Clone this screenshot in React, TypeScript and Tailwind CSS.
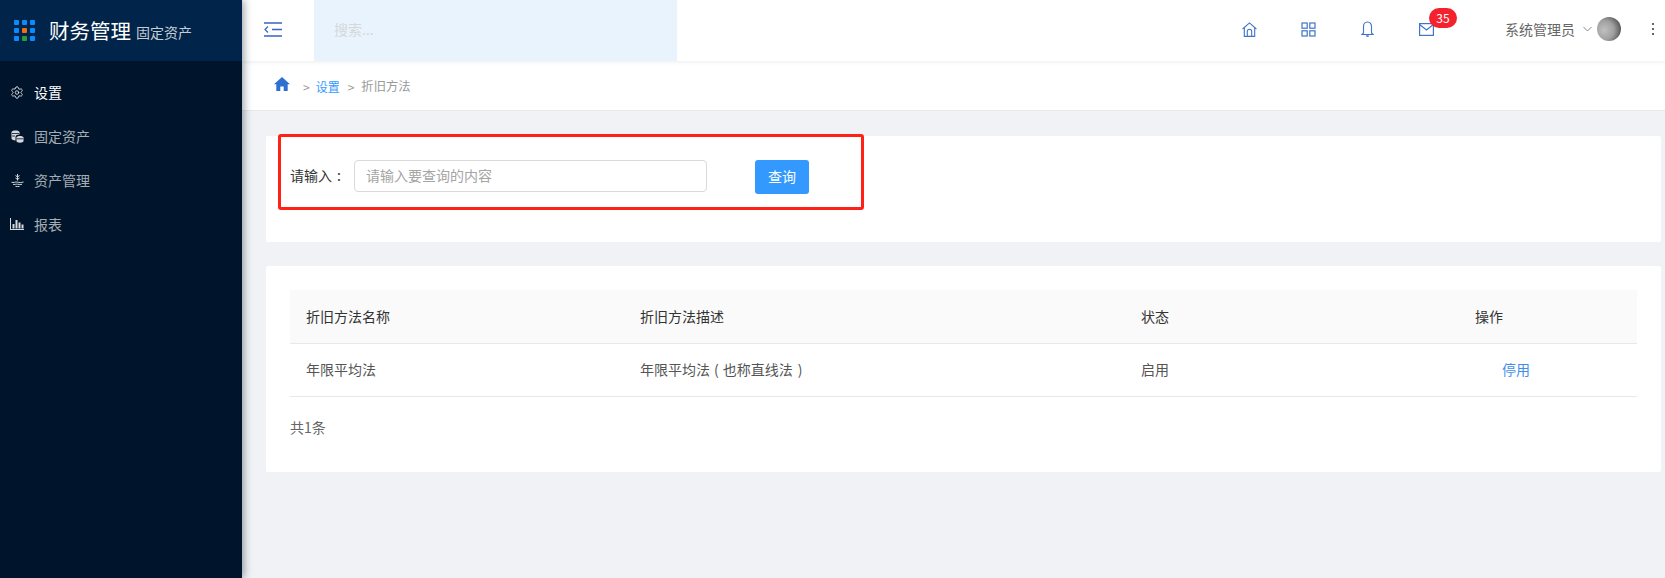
import { Settings } from "lucide-react";

const font = { fontFamily: '"Noto Sans CJK SC", "Liberation Sans", sans-serif' };

function Logo() {
  const cols = ["#0a8cff", "#0a8cff", "#0a8cff", "#0a8cff", "#f0700f", "#0a8cff", "#0a8cff", "#2a9d3a", "#0a8cff"];
  return (
    <div className="grid grid-cols-[repeat(3,5px)] grid-rows-[repeat(3,5px)] gap-[3px] w-[21px] h-[21px]">
      {cols.map((c, i) => (
        <span key={i} className="rounded-[1px]" style={{ background: c }} />
      ))}
    </div>
  );
}

function DbIcon() {
  return (
    <svg width="13" height="13" viewBox="0 0 13 13" fill="#d5d9de">
      <path d="M0.5 2.200C0.5 1 2.400.4 4.500.4S8.500 1 8.500 2.200v2.200c-1.900-.1-3.700.7-4 2.400v3.700C2.300 10.400.5 9.800.5 8.600z" />
      <path d="M5.500 7.500c0-1 1.600-1.600 3.500-1.600s3.500.6 3.500 1.600v3.600c0 1-1.600 1.600-3.500 1.600s-3.500-.6-3.500-1.600z" />
      <path d="M5.800 8.800h6.400" stroke="#001529" strokeWidth=".8" />
      <path d="M1 3.500h7M1 6h3" stroke="#001529" strokeWidth=".8" />
    </svg>
  );
}

function AssetIcon() {
  return (
    <svg width="13" height="13" viewBox="0 0 13 13" fill="none" stroke="#d5d9de" strokeWidth="1">
      <path d="M6.500 0v6.500M4.500 1.500 6.500 3l2-1.500M4.500 4l2 1.500L8.500 4" />
      <path d="M.5 8.200c2 .9 3.900-.6 6-.1 1.800.5 3.800.6 6-.1" />
      <path d="M2 10.300c1.500.5 3.100-.3 4.500-.1 1.500.2 3.100.5 4.500.1" />
      <path d="M4.500 12.400c1 .2 3 .2 4 0" />
    </svg>
  );
}

function ChartIcon() {
  return (
    <svg width="14" height="12" viewBox="0 0 14 12" fill="#d5d9de">
      <path d="M0 0h1v11h13v1H0z" />
      <rect x="2.500" y="6" width="2" height="4.500" />
      <rect x="5.500" y="2" width="2" height="8.500" />
      <rect x="8.500" y="4.500" width="2" height="6" />
      <rect x="11.500" y="6.500" width="2" height="4" />
    </svg>
  );
}

function NavItem({ icon, label, active }: { icon: React.ReactNode; label: string; active?: boolean }) {
  return (
    <div className={`h-[44px] flex items-center pl-[10px] gap-[10px] text-[14px] ${active ? "text-white" : "text-[#a6adb4]"}`}>
      <span className="w-[14px] flex justify-center">{icon}</span>
      <span>{label}</span>
    </div>
  );
}

const blue = "#3f74c9";

function TopIcons() {
  return (
    <div className="flex items-center gap-[44px] mr-[71px]">
      <svg width="15" height="15" viewBox="0 0 15 15" fill="none" stroke={blue} strokeWidth="1.100">
        <path d="M.6 7 7.500.9 14.400 7" />
        <path d="M2.300 5.800v8.600h10.400V5.800" />
        <path d="M5.300 14.400V9.500c0-3 4.400-3 4.400 0v4.900" />
      </svg>
      <svg width="15" height="15" viewBox="0 0 15 15" fill="none" stroke={blue} strokeWidth="1.200">
        <rect x="1" y="1" width="5.200" height="5.200" />
        <rect x="8.800" y="1" width="5.200" height="5.200" />
        <rect x="1" y="8.800" width="5.200" height="5.200" />
        <rect x="8.800" y="8.800" width="5.200" height="5.200" />
      </svg>
      <svg width="15" height="16" viewBox="0 0 15 16" fill="none" stroke={blue} strokeWidth="1.100">
        <path d="M7.500 1C4.800 1 3.500 3.200 3.500 5.500v6.500L2 13.500h11L11.500 12V5.500C11.500 3.200 10.200 1 7.500 1z" />
        <path d="M6.300 15h2.400" strokeWidth="1.600" />
      </svg>
      <div className="relative w-[15px] h-[13px]">
        <svg width="15" height="13" viewBox="0 0 15 13" fill="none" stroke={blue} strokeWidth="1.200">
          <rect x=".6" y=".6" width="13.800" height="11.800" />
          <path d="M.6 1.500 7.500 7l6.900-5.500" />
        </svg>
        <span className="absolute left-[10px] top-[-15px] w-[28px] h-[20px] rounded-full bg-[#f5222d] text-white text-[12px] leading-[20px] text-center">35</span>
      </div>
    </div>
  );
}

function Cell({ className, children }: { className: string; children: React.ReactNode }) {
  return <div className={`pl-[16px] ${className}`}>{children}</div>;
}

export default function App() {
  return (
    <div className="flex h-[578px] w-[1665px] overflow-hidden bg-[#f0f2f5]" style={font}>
      <aside className="w-[242px] shrink-0 bg-[#00152b] shadow-[2px_0_8px_rgba(0,21,41,0.4)] z-20">
        <div className="h-[61px] bg-[#00244a] flex items-center pl-[14px]">
          <Logo />
          <span className="ml-[14px] text-[20.500px] text-white">财务管理</span>
          <span className="ml-[5px] mt-[4px] text-[14px] text-[#c6ccd3]">固定资产</span>
        </div>
        <nav className="pt-[9px]">
          <NavItem active icon={<Settings size={15} strokeWidth={1.400} color="#eceef0" />} label="设置" />
          <NavItem icon={<DbIcon />} label="固定资产" />
          <NavItem icon={<AssetIcon />} label="资产管理" />
          <NavItem icon={<ChartIcon />} label="报表" />
        </nav>
      </aside>

      <div className="flex-1 min-w-0 flex flex-col">
        <header className="h-[61px] shrink-0 bg-white flex items-stretch shadow-[0_1px_4px_rgba(0,21,41,0.08)] z-10">
          <div className="w-[72px] pr-[11px] pb-[2px] flex items-center justify-center">
            <svg width="18" height="15" viewBox="0 0 18 15" fill="none" stroke="#3566c0" strokeWidth="1.500">
              <path d="M0 1h18M8 7.500h10M0 14h18" />
              <path d="M4 4.500 1 7.500l3 3" strokeWidth="1.200" />
            </svg>
          </div>
          <div className="w-[363px] bg-[#e8f3fe] flex items-center pl-[20px] pb-[3px] text-[14px] text-[#d6d8da]">搜索...</div>
          <div className="flex-1 flex items-center pb-[3px]">
            <div className="flex-1" />
            <TopIcons />
            <span className="text-[14px] text-[#666]">系统管理员</span>
            <svg className="ml-[8px]" width="9" height="6" viewBox="0 0 9 6" fill="none" stroke="#888" strokeWidth="1">
              <path d="M.5 1 4.500 5l4-4" />
            </svg>
            <div className="ml-[5px] w-[24px] h-[24px] rounded-full bg-[radial-gradient(circle_at_30%_55%,#c0c0c0_0%,#a0a0a0_45%,#2e2e2e_100%)]" />
            <div className="ml-[31px] mr-[11px] flex flex-col gap-[3px]">
              <span className="w-[2px] h-[2px] bg-[#666]" />
              <span className="w-[2px] h-[2px] bg-[#666]" />
              <span className="w-[2px] h-[2px] bg-[#666]" />
            </div>
          </div>
        </header>

        <div className="h-[50px] shrink-0 bg-white border-b border-[#e8e8e8] flex items-center pl-[32px] text-[12px] text-[#999]">
          <svg width="16" height="14" viewBox="0 0 16 14" fill="#2f6fd0" className="mt-[-3px]">
            <path d="M8 0 0 7.300h2.300V14h4V9.500h3.400V14h4V7.300H16z" />
          </svg>
          <span className="ml-[13px] mt-[2px]">&gt;</span>
          <span className="ml-[6px] mt-[2px] text-[#3399ff]">设置</span>
          <span className="ml-[8px] mt-[2px]">&gt;</span>
          <span className="ml-[7px] mt-[2px] text-[12.300px]">折旧方法</span>
        </div>

        <main className="pl-[24px] pr-[4px] pt-[25px] flex flex-col gap-[24px]">
          <section className="relative h-[106px] bg-white rounded-[2px] pl-[24px] pt-[24px]">
            <div className="flex items-start">
              <label className="text-[14px] leading-[30px] text-[#333] w-[64px]">
                请输入<span className="ml-[5px]">:</span>
              </label>
              <div className="w-[353px] h-[32px] border border-[#d9d9d9] rounded-[4px] flex items-center pl-[11px] pb-[1px] text-[14px] text-[#a5a5a5]">请输入要查询的内容</div>
              <button className="ml-[48px] w-[54px] h-[34px] rounded-[3px] bg-[#3399ff] text-white text-[14px] pb-[2px]">查询</button>
            </div>
            <div className="absolute left-[12px] top-[-2px] w-[586px] h-[76px] border-[3px] border-[#ff2016] rounded-[3px]" />
          </section>

          <section className="h-[206px] bg-white rounded-[2px] pt-[24px] px-[24px] text-[14px]">
            <div className="flex h-[54px] items-center pb-[1px] bg-[#fafafa] border-b border-[#e8e8e8] text-[#333]">
              <Cell className="w-[334px]">折旧方法名称</Cell>
              <Cell className="w-[501px]">折旧方法描述</Cell>
              <Cell className="w-[334px]">状态</Cell>
              <Cell className="flex-1">操作</Cell>
            </div>
            <div className="flex h-[53px] items-center pb-[1px] border-b border-[#e8e8e8] text-[#555]">
              <Cell className="w-[334px]">年限平均法</Cell>
              <Cell className="w-[501px]">
                年限平均法<span className="mx-[4px]">(</span>也称直线法<span className="ml-[5px]">)</span>
              </Cell>
              <Cell className="w-[334px]">启用</Cell>
              <div className="flex-1 pl-[43px] text-[#3f8ee8]">停用</div>
            </div>
            <div className="mt-[20px] text-[#666]">共1条</div>
          </section>
        </main>
      </div>
    </div>
  );
}
